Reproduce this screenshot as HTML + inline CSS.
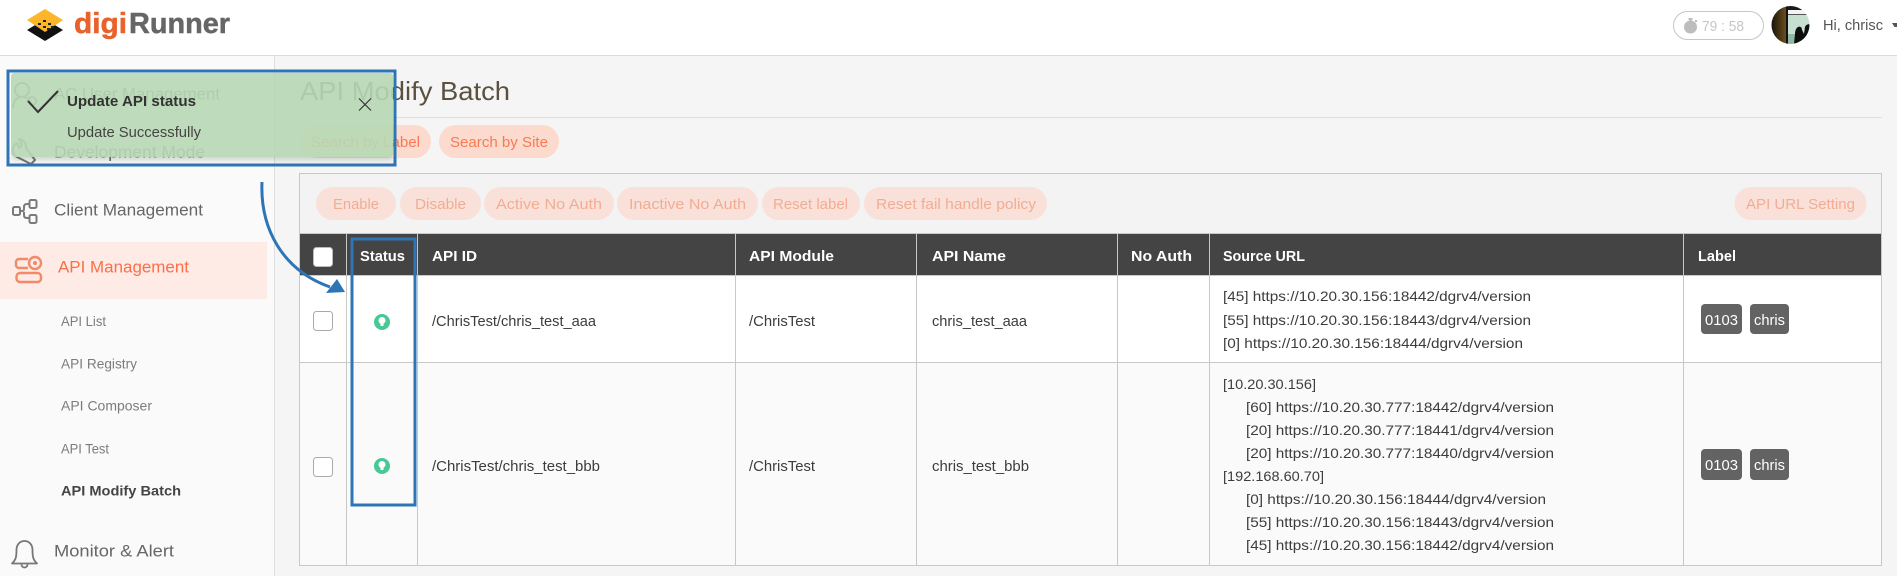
<!DOCTYPE html>
<html><head><meta charset="utf-8"><title>digiRunner</title>
<style>
html,body{margin:0;padding:0;width:1897px;height:576px;overflow:hidden;background:#f5f5f5}
svg{display:block}
text{font-family:"Liberation Sans",sans-serif;font-size:15px;fill:#3c3c3c}
.nav{fill:#666;font-size:16.5px}
.sub{fill:#7c7c7c;font-size:14px}
.th{fill:#fff;font-weight:bold;font-size:14.5px}
.url{font-size:14px;fill:#3c3c3c}
.btn{fill:#f3ac94;font-size:14.5px}
.bdg{fill:#fff;font-size:14.5px}
</style></head><body>
<svg xmlns="http://www.w3.org/2000/svg" width="1897" height="576" viewBox="0 0 1897 576">
<defs>
<clipPath id="av"><circle cx="1790.5" cy="25" r="19"/></clipPath>
<clipPath id="below"><rect x="0" y="157" width="400" height="20"/></clipPath>
<filter id="sh" x="-5%" y="-20%" width="110%" height="140%"><feGaussianBlur stdDeviation="3"/></filter>
<linearGradient id="brn" x1="0" x2="1" y1="0" y2="0"><stop offset="0" stop-color="#15100a"/><stop offset="1" stop-color="#6b4f1c"/></linearGradient>
</defs>
<!-- backgrounds -->
<rect width="1897" height="576" fill="#f5f5f5"/>
<rect y="55" width="274" height="521" fill="#fafafa"/>
<rect x="274" y="55" width="1" height="521" fill="#dedede"/>
<rect width="1897" height="55" fill="#fff"/>
<rect y="55" width="1897" height="1" fill="#dcdcdc"/>

<!-- logo -->
<polygon points="27,30 45,19 63,30 45,41" fill="#111"/>
<polygon points="27,20 45,9 63,20 45,32" fill="#fbb62c"/>
<g fill="#222"><rect x="43" y="20" width="3" height="2"/><rect x="38" y="23" width="3" height="2"/><rect x="48" y="23" width="3" height="2"/><rect x="43" y="26" width="3" height="2"/><rect x="51" y="26" width="3" height="2"/><rect x="47" y="28" width="3" height="2"/></g>
<text x="74" y="33" style="font-size:29px;fill:#e8622c;font-weight:bold;stroke:#e8622c;stroke-width:.5" textLength="53" lengthAdjust="spacingAndGlyphs">digi</text>
<text x="129" y="33" style="font-size:29px;fill:#666;font-weight:bold;stroke:#666;stroke-width:.5" textLength="101" lengthAdjust="spacingAndGlyphs">Runner</text>

<!-- top right -->
<rect x="1673.5" y="11.5" width="90" height="28" rx="14" fill="#fff" stroke="#c6c6c6"/>
<circle cx="1690.500" cy="27" r="6.500" fill="#bdbdbd"/><rect x="1688.500" y="18" width="4" height="2" fill="#bdbdbd"/><rect x="1689.500" y="19" width="2" height="3" fill="#bdbdbd"/><rect x="1695" y="20" width="2" height="2" fill="#bdbdbd"/>
<text x="1702" y="31" style="font-size:14.5px;fill:#c6c6c6" textLength="42" lengthAdjust="spacingAndGlyphs">79 : 58</text>
<g clip-path="url(#av)">
<rect x="1771" y="6" width="40" height="38" fill="#c6dfd0"/>
<rect x="1771" y="6" width="15" height="38" fill="url(#brn)"/>
<rect x="1786" y="6" width="2" height="38" fill="#111"/>
<rect x="1788" y="6" width="23" height="4" fill="#1a1a1a"/>
<rect x="1788" y="10" width="23" height="4" fill="#f2f5f2"/>
<rect x="1788" y="14" width="23" height="1" fill="#555"/>
<rect x="1788" y="34" width="23" height="10" fill="#8fb7a4"/>
<path d="M1794 44l1-10c0-3 1-6 3-7s4 0 4 3l2 4 1-7c1-3 5-4 6-1v18z" fill="#0d0d0d"/>
</g>
<text x="1823" y="30" style="font-size:14.5px;fill:#555" textLength="60" lengthAdjust="spacingAndGlyphs">Hi, chrisc</text>
<polygon points="1892,23 1897,23 1897,27 1894.5,27" fill="#555"/>

<!-- sidebar -->
<g fill="none" stroke="#777" stroke-width="2">
<circle cx="22" cy="90" r="7"/><path d="M13 108c0-7 4-11 9-11s8 3 9 6"/><circle cx="32" cy="101" r="4"/>
<path d="M17 143a8 8 0 0 0 0 14l14 7 4-4-9-12a8 8 0 0 0-7-9l3 6-3 3z" stroke-linejoin="round"/>
</g>
<text x="54" y="99.5" class="nav" textLength="166" lengthAdjust="spacingAndGlyphs">AC User Management</text>
<text x="54" y="157.5" class="nav" textLength="151" lengthAdjust="spacingAndGlyphs">Development Mode</text>
<g fill="none" stroke="#7a7a7a" stroke-width="2">
<rect x="13" y="207" width="7" height="8" rx="1.5"/><rect x="29.500" y="200" width="7" height="8" rx="1.5"/><rect x="29.500" y="215" width="7" height="8" rx="1.5"/>
<path d="M20 211h2c2 0 2-1 2-3v-1c0-2 1-3 3-3h2.500M24 212v3c0 2 1 3 3 3h2.500"/>
</g>
<text x="54" y="215.5" class="nav" textLength="149" lengthAdjust="spacingAndGlyphs">Client Management</text>
<rect y="242" width="267" height="57" fill="#ffebe5"/>
<g fill="none" stroke="#f28a68" stroke-width="2.400">
<path d="M28 259h-9a3 3 0 0 0-3 3v3a3 3 0 0 0 3 3h9"/>
<circle cx="35" cy="263" r="6"/>
<rect x="16.500" y="273" width="24.500" height="9" rx="3.500"/>
</g>
<circle cx="35" cy="263" r="2" fill="#f28a68"/>
<text x="58" y="272.500" class="nav" style="fill:#fb6f48" textLength="131" lengthAdjust="spacingAndGlyphs">API Management</text>
<text x="61" y="326" class="sub" textLength="45" lengthAdjust="spacingAndGlyphs">API List</text>
<text x="61" y="368.500" class="sub" textLength="76" lengthAdjust="spacingAndGlyphs">API Registry</text>
<text x="61" y="410.500" class="sub" textLength="91" lengthAdjust="spacingAndGlyphs">API Composer</text>
<text x="61" y="453.500" class="sub" textLength="48" lengthAdjust="spacingAndGlyphs">API Test</text>
<text x="61" y="495.500" class="sub" style="font-weight:bold;fill:#444" textLength="120" lengthAdjust="spacingAndGlyphs">API Modify Batch</text>
<g fill="none" stroke="#777" stroke-width="1.8">
<path d="M24.500 541c-5 0-8 4-8 9 0 8-1 10-4.500 13.500h25c-3.500-3.500-4.500-5.500-4.500-13.500 0-5-3-9-8-9z" stroke-linejoin="round"/>
<path d="M21.500 564.500a3 3 0 0 0 6 0"/>
</g>
<text x="54" y="556.500" class="nav" textLength="120" lengthAdjust="spacingAndGlyphs">Monitor &amp; Alert</text>

<!-- main header -->
<text x="300" y="100" style="font-size:26px;fill:#5b5141" textLength="210" lengthAdjust="spacingAndGlyphs">API Modify Batch</text>
<rect x="300" y="117" width="1582" height="1" fill="#dedede"/>
<rect x="300" y="125" width="131" height="33" rx="16.500" fill="#fcdacd"/>
<rect x="439" y="125" width="120" height="33" rx="16.500" fill="#fcdacd"/>
<text x="311" y="147" style="font-size:14.500px;fill:#f97a52" textLength="109" lengthAdjust="spacingAndGlyphs">Search by Label</text>
<text x="450" y="147" style="font-size:14.500px;fill:#f97a52" textLength="98" lengthAdjust="spacingAndGlyphs">Search by Site</text>

<!-- panel -->
<rect x="299.500" y="173.500" width="1582" height="392" fill="#f3f3f3" stroke="#c8c8c8"/>
<g fill="#f9e1d9">
<rect x="316" y="187" width="80" height="33" rx="16.500"/><rect x="400" y="187" width="81" height="33" rx="16.500"/>
<rect x="484" y="187" width="130" height="33" rx="16.500"/><rect x="617" y="187" width="141" height="33" rx="16.500"/>
<rect x="762" y="187" width="98" height="33" rx="16.500"/><rect x="864" y="187" width="183" height="33" rx="16.500"/>
<rect x="1734.500" y="187" width="132" height="33" rx="16.500"/>
</g>
<text x="333" y="209" class="btn" textLength="46" lengthAdjust="spacingAndGlyphs">Enable</text>
<text x="415" y="209" class="btn" textLength="51" lengthAdjust="spacingAndGlyphs">Disable</text>
<text x="496" y="209" class="btn" textLength="106" lengthAdjust="spacingAndGlyphs">Active No Auth</text>
<text x="629" y="209" class="btn" textLength="117" lengthAdjust="spacingAndGlyphs">Inactive No Auth</text>
<text x="773" y="209" class="btn" textLength="75" lengthAdjust="spacingAndGlyphs">Reset label</text>
<text x="876" y="209" class="btn" textLength="160" lengthAdjust="spacingAndGlyphs">Reset fail handle policy</text>
<text x="1746" y="209" class="btn" textLength="109" lengthAdjust="spacingAndGlyphs">API URL Setting</text>

<!-- table -->
<rect x="300" y="233" width="1582" height="42" fill="#444"/>
<rect x="300" y="275" width="1582" height="87" fill="#fff"/>
<rect x="300" y="362" width="1582" height="204" fill="#fafafa"/>
<rect x="299" y="233" width="1583" height="1" fill="#c8c8c8"/>
<rect x="299" y="275" width="1583" height="1" fill="#c8c8c8"/>
<rect x="299" y="362" width="1583" height="1" fill="#c8c8c8"/>
<rect x="299" y="565" width="1583" height="1" fill="#c8c8c8"/>
<g fill="#c8c8c8">
<rect x="299" y="233" width="1" height="333"/><rect x="346" y="233" width="1" height="333"/>
<rect x="417" y="233" width="1" height="333"/><rect x="735" y="233" width="1" height="333"/>
<rect x="916" y="233" width="1" height="333"/><rect x="1117" y="233" width="1" height="333"/>
<rect x="1209" y="233" width="1" height="333"/><rect x="1683" y="233" width="1" height="333"/>
<rect x="1881" y="233" width="1" height="333"/>
</g>
<rect x="313.500" y="247.500" width="19" height="19" rx="3" fill="#fff" stroke="#bbb"/>
<rect x="313.500" y="311.500" width="19" height="19" rx="3" fill="#fff" stroke="#aaa"/>
<rect x="313.500" y="457.500" width="19" height="19" rx="3" fill="#fff" stroke="#aaa"/>
<text x="360" y="261" class="th" textLength="45" lengthAdjust="spacingAndGlyphs">Status</text>
<text x="432" y="261" class="th" textLength="45" lengthAdjust="spacingAndGlyphs">API ID</text>
<text x="749" y="261" class="th" textLength="85" lengthAdjust="spacingAndGlyphs">API Module</text>
<text x="932" y="261" class="th" textLength="74" lengthAdjust="spacingAndGlyphs">API Name</text>
<text x="1131" y="261" class="th" textLength="61" lengthAdjust="spacingAndGlyphs">No Auth</text>
<text x="1223" y="261" class="th" textLength="82" lengthAdjust="spacingAndGlyphs">Source URL</text>
<text x="1698" y="261" class="th" textLength="38" lengthAdjust="spacingAndGlyphs">Label</text>

<!-- status icons -->
<g><circle cx="382" cy="322" r="8" fill="#47c995"/><circle cx="382" cy="320.500" r="3.500" fill="#fff"/><rect x="380.500" y="323" width="3" height="3" fill="#fff"/></g>
<g><circle cx="382" cy="466" r="8" fill="#47c995"/><circle cx="382" cy="464.500" r="3.500" fill="#fff"/><rect x="380.500" y="467" width="3" height="3" fill="#fff"/></g>

<!-- row 1 -->
<text x="432" y="326" textLength="164" lengthAdjust="spacingAndGlyphs">/ChrisTest/chris_test_aaa</text>
<text x="749" y="326" textLength="66" lengthAdjust="spacingAndGlyphs">/ChrisTest</text>
<text x="932" y="326" textLength="95" lengthAdjust="spacingAndGlyphs">chris_test_aaa</text>
<text x="1223" y="301" class="url" textLength="308" lengthAdjust="spacingAndGlyphs">[45] https://10.20.30.156:18442/dgrv4/version</text>
<text x="1223" y="325" class="url" textLength="308" lengthAdjust="spacingAndGlyphs">[55] https://10.20.30.156:18443/dgrv4/version</text>
<text x="1223" y="348" class="url" textLength="300" lengthAdjust="spacingAndGlyphs">[0] https://10.20.30.156:18444/dgrv4/version</text>
<rect x="1701" y="304" width="41" height="30" rx="4" fill="#636363"/><rect x="1750" y="304" width="39" height="30" rx="4" fill="#636363"/>
<text x="1705" y="325" class="bdg" textLength="33" lengthAdjust="spacingAndGlyphs">0103</text>
<text x="1754" y="325" class="bdg" textLength="31" lengthAdjust="spacingAndGlyphs">chris</text>

<!-- row 2 -->
<text x="432" y="471" textLength="168" lengthAdjust="spacingAndGlyphs">/ChrisTest/chris_test_bbb</text>
<text x="749" y="471" textLength="66" lengthAdjust="spacingAndGlyphs">/ChrisTest</text>
<text x="932" y="471" textLength="97" lengthAdjust="spacingAndGlyphs">chris_test_bbb</text>
<text x="1223" y="389" class="url" textLength="93" lengthAdjust="spacingAndGlyphs">[10.20.30.156]</text>
<text x="1246" y="412" class="url" textLength="308" lengthAdjust="spacingAndGlyphs">[60] https://10.20.30.777:18442/dgrv4/version</text>
<text x="1246" y="435" class="url" textLength="308" lengthAdjust="spacingAndGlyphs">[20] https://10.20.30.777:18441/dgrv4/version</text>
<text x="1246" y="458" class="url" textLength="308" lengthAdjust="spacingAndGlyphs">[20] https://10.20.30.777:18440/dgrv4/version</text>
<text x="1223" y="481" class="url" textLength="101" lengthAdjust="spacingAndGlyphs">[192.168.60.70]</text>
<text x="1246" y="504" class="url" textLength="300" lengthAdjust="spacingAndGlyphs">[0] https://10.20.30.156:18444/dgrv4/version</text>
<text x="1246" y="527" class="url" textLength="308" lengthAdjust="spacingAndGlyphs">[55] https://10.20.30.156:18443/dgrv4/version</text>
<text x="1246" y="550" class="url" textLength="308" lengthAdjust="spacingAndGlyphs">[45] https://10.20.30.156:18442/dgrv4/version</text>
<rect x="1701" y="449" width="41" height="31" rx="4" fill="#636363"/><rect x="1750" y="449" width="39" height="31" rx="4" fill="#636363"/>
<text x="1705" y="470" class="bdg" textLength="33" lengthAdjust="spacingAndGlyphs">0103</text>
<text x="1754" y="470" class="bdg" textLength="31" lengthAdjust="spacingAndGlyphs">chris</text>

<!-- toast -->
<g clip-path="url(#below)"><rect x="11" y="76" width="382" height="84" rx="3" fill="#000" opacity=".16" filter="url(#sh)"/></g>
<rect x="11" y="73" width="382" height="84" rx="3" fill="#b7d8b4" fill-opacity=".9"/>
<path d="M28 101l10 11 20-21" fill="none" stroke="#333" stroke-width="2"/>
<text x="67" y="106" style="font-size:14.500px;font-weight:bold;fill:#333" textLength="129" lengthAdjust="spacingAndGlyphs">Update API status</text>
<text x="67" y="137" style="font-size:14.500px;fill:#444" textLength="134" lengthAdjust="spacingAndGlyphs">Update Successfully</text>
<path d="M359 98.500l12 12M371 98.500l-12 12" stroke="#333" stroke-width="1.200" fill="none"/>

<!-- annotations -->
<rect x="8" y="71" width="387" height="94" fill="none" stroke="#2e75b6" stroke-width="3"/>
<rect x="352" y="239" width="63" height="266" fill="none" stroke="#2e75b6" stroke-width="3"/>
<path d="M262 182C260 228 282 270 330 287" fill="none" stroke="#2e75b6" stroke-width="3"/>
<polygon points="345,292 326,293 337,279" fill="#2e75b6"/>
</svg>
</body></html>
